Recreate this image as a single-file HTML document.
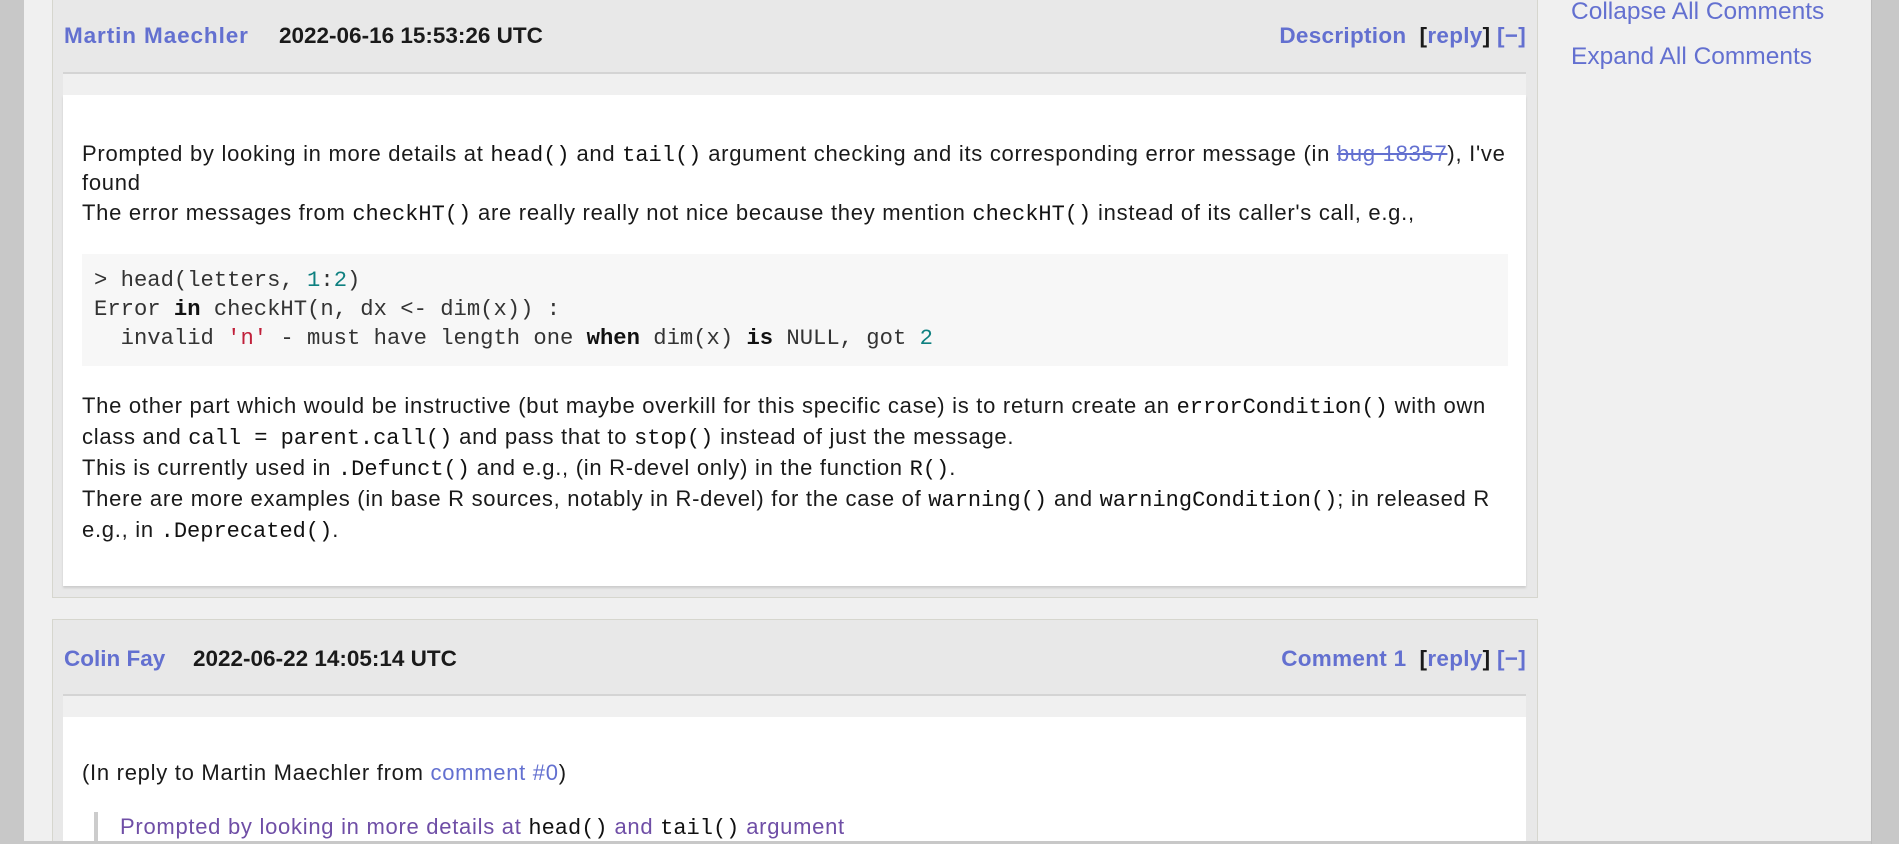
<!DOCTYPE html>
<html style="width:1899px;height:844px;overflow:hidden"><head><meta charset="utf-8"><style>
*{margin:0;padding:0;box-sizing:border-box}
body{width:1899px;height:844px;overflow:hidden;background:#f0f0f0;font-family:"Liberation Sans",sans-serif;color:#1a1a1a;position:relative}
.abs{position:absolute;white-space:nowrap}
.l{position:absolute;left:82px;white-space:nowrap;font-size:22px;letter-spacing:0.72px;line-height:30px;height:30px}
code{font-family:"Liberation Mono",monospace;font-size:22px;letter-spacing:0;color:#111}
a,.lk{color:#6370d0;text-decoration:none}
.hd{font-size:22.5px;font-weight:bold;line-height:30px;letter-spacing:0.3px}
.dt{letter-spacing:0}
.cl{position:absolute;left:94px;font-family:"Liberation Mono",monospace;font-size:22.2px;line-height:29px;white-space:pre;color:#333}
.n{color:#0e8080}.s{color:#c0203a}b.k{color:#111}
</style></head><body>
<div class="abs" style="left:0;top:0;width:24px;height:844px;background:#c8c8c8"></div>
<div class="abs" style="left:1871px;top:0;width:28px;height:844px;background:#c8c8c8;border-left:1px solid #bbb"></div>

<!-- panel 1 -->
<div class="abs" style="left:52px;top:-2px;width:1486px;height:600px;background:#e8e8e8;border:1px solid #d6d6ce"></div>
<div class="abs" style="left:63px;top:72px;width:1463px;height:2px;background:#d4d4d4"></div>
<div class="abs" style="left:63px;top:74px;width:1463px;height:21px;background:#f0f0f0"></div>
<div class="abs" style="left:63px;top:95px;width:1463px;height:491px;background:#fff;box-shadow:0 2px 2px #ccc"></div>
<div class="abs hd lk" style="left:64px;top:21px;letter-spacing:0.9px">Martin Maechler</div>
<div class="abs hd dt" style="left:279px;top:21px">2022-06-16 15:53:26 UTC</div>
<div class="abs hd" style="left:1200px;top:21px;width:326px;text-align:right"><span class="lk">Description</span>&nbsp; [<span class="lk">reply</span>] <span class="lk">[−]</span></div>

<div class="l" style="top:139px">Prompted by looking in more details at <code>head()</code> and <code>tail()</code> argument checking and its corresponding error message (in <a style="text-decoration:line-through">bug 18357</a>), I've</div>
<div class="l" style="top:168px">found</div>
<div class="l" style="top:198px">The error messages from <code>checkHT()</code> are really really not nice because they mention <code>checkHT()</code> instead of its caller's call, e.g.,</div>
<div class="abs" style="left:82px;top:254px;width:1426px;height:112px;background:#f7f7f7"></div>
<div class="cl" style="top:266px">&gt; head(letters, <span class="n">1</span>:<span class="n">2</span>)</div>
<div class="cl" style="top:295px">Error <b class="k">in</b> checkHT(n, dx &lt;- dim(x)) :</div>
<div class="cl" style="top:324px">  invalid <span class="s">'n'</span> - must have length one <b class="k">when</b> dim(x) <b class="k">is</b> NULL, got <span class="n">2</span></div>
<div class="l" style="top:391px">The other part which would be instructive (but maybe overkill for this specific case) is to return create an <code>errorCondition()</code> with own</div>
<div class="l" style="top:422px">class and <code>call = parent.call()</code> and pass that to <code>stop()</code> instead of just the message.</div>
<div class="l" style="top:453px">This is currently used in <code>.Defunct()</code> and e.g., (in R-devel only) in the function <code>R()</code>.</div>
<div class="l" style="top:484px">There are more examples (in base R sources, notably in R-devel) for the case of <code>warning()</code> and <code>warningCondition()</code>; in released R</div>
<div class="l" style="top:515px">e.g., in <code>.Deprecated()</code>.</div>

<!-- panel 2 -->
<div class="abs" style="left:52px;top:619px;width:1486px;height:240px;background:#e8e8e8;border:1px solid #d6d6ce"></div>
<div class="abs" style="left:63px;top:694px;width:1463px;height:2px;background:#d4d4d4"></div>
<div class="abs" style="left:63px;top:696px;width:1463px;height:21px;background:#f0f0f0"></div>
<div class="abs" style="left:63px;top:717px;width:1463px;height:130px;background:#fff"></div>
<div class="abs hd lk" style="left:64px;top:644px;letter-spacing:0">Colin Fay</div>
<div class="abs hd dt" style="left:193px;top:644px">2022-06-22 14:05:14 UTC</div>
<div class="abs hd" style="left:1200px;top:644px;width:326px;text-align:right"><span class="lk">Comment 1</span>&nbsp; [<span class="lk">reply</span>] <span class="lk">[−]</span></div>
<div class="l" style="top:758px">(In reply to Martin Maechler from <a>comment #0</a>)</div>
<div class="abs" style="left:94px;top:812px;width:4px;height:30px;background:#ccc"></div>
<div class="l" style="left:120px;top:812px;color:#6f4ea6">Prompted by looking in more details at <code>head()</code> and <code>tail()</code> argument</div>

<div class="abs" style="left:0;top:841px;width:1871px;height:3px;background:#c8c8c8"></div>

<!-- sidebar -->
<div class="abs lk" style="left:1571px;top:-3px;font-size:24.5px;line-height:30px">Collapse All Comments</div>
<div class="abs lk" style="left:1571px;top:42px;font-size:24.5px;line-height:30px">Expand All Comments</div>
</body></html>
